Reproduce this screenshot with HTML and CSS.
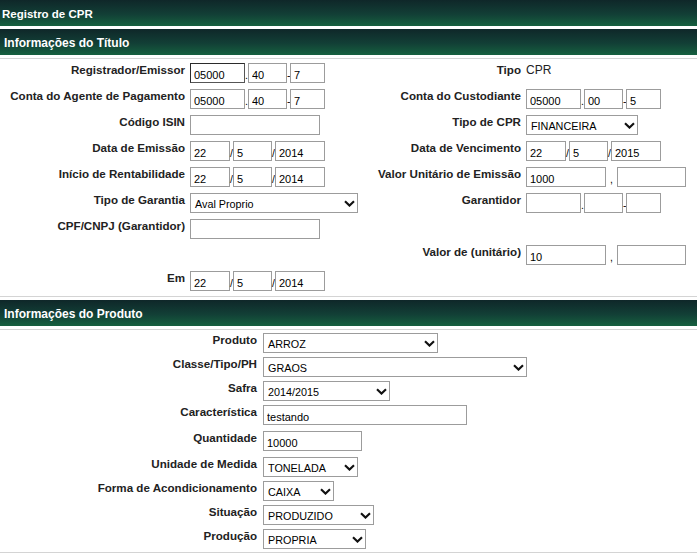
FILE: index.html
```html
<!DOCTYPE html>
<html lang="pt-BR">
<head>
<meta charset="utf-8">
<title>Registro de CPR</title>
<link rel="stylesheet" href="styles.css">
</head>
<body>
<div class="page-title">Registro de CPR</div>

<section class="section">
  <h2 class="section-title">Informações do Título</h2>
  <div class="grid grid-titulo">
    <div class="lbl">Registrador/Emissor</div>
    <div class="val"><input class="in w55 focus" value="05000"><span class="sep">.</span><input class="in w39" value="40"><span class="sep">-</span><input class="in w35" value="7"></div>
    <div class="lbl">Tipo</div>
    <div class="val"><span class="static">CPR</span></div>

    <div class="lbl">Conta do Agente de Pagamento</div>
    <div class="val"><input class="in w55" value="05000"><span class="sep">.</span><input class="in w39" value="40"><span class="sep">-</span><input class="in w35" value="7"></div>
    <div class="lbl">Conta do Custodiante</div>
    <div class="val"><input class="in w55" value="05000"><span class="sep">.</span><input class="in w39" value="00"><span class="sep">-</span><input class="in w35" value="5"></div>

    <div class="lbl">Código ISIN</div>
    <div class="val"><input class="in w130" value=""></div>
    <div class="lbl">Tipo de CPR</div>
    <div class="val"><div class="sel w112"><span>FINANCEIRA</span><svg class="chev" viewBox="0 0 11 7" width="11" height="7"><polyline points="1,1.2 5.5,5.6 10,1.2"/></svg></div></div>

    <div class="lbl">Data de Emissão</div>
    <div class="val"><input class="in w40" value="22"><span class="sep">/</span><input class="in w39" value="5"><span class="sep">/</span><input class="in w50" value="2014"></div>
    <div class="lbl">Data de Vencimento</div>
    <div class="val"><input class="in w40" value="22"><span class="sep">/</span><input class="in w39" value="5"><span class="sep">/</span><input class="in w50" value="2015"></div>

    <div class="lbl">Início de Rentabilidade</div>
    <div class="val"><input class="in w40" value="22"><span class="sep">/</span><input class="in w39" value="5"><span class="sep">/</span><input class="in w50" value="2014"></div>
    <div class="lbl">Valor Unitário de Emissão</div>
    <div class="val"><input class="in w80" value="1000"><span class="sep wide">,</span><input class="in w69" value=""></div>

    <div class="lbl">Tipo de Garantia</div>
    <div class="val"><div class="sel w168"><span>Aval Proprio</span><svg class="chev" viewBox="0 0 11 7" width="11" height="7"><polyline points="1,1.2 5.5,5.6 10,1.2"/></svg></div></div>
    <div class="lbl">Garantidor</div>
    <div class="val"><input class="in w55" value=""><span class="sep">.</span><input class="in w39" value=""><span class="sep">-</span><input class="in w35" value=""></div>

    <div class="lbl">CPF/CNPJ (Garantidor)</div>
    <div class="val"><input class="in w130" value=""></div>
    <div class="lbl"></div>
    <div class="val"></div>

    <div class="lbl"></div>
    <div class="val"></div>
    <div class="lbl">Valor de (unitário)</div>
    <div class="val"><input class="in w80" value="10"><span class="sep wide">,</span><input class="in w69" value=""></div>

    <div class="lbl">Em</div>
    <div class="val"><input class="in w40" value="22"><span class="sep">/</span><input class="in w39" value="5"><span class="sep">/</span><input class="in w50" value="2014"></div>
    <div class="lbl"></div>
    <div class="val"></div>
  </div>
</section>

<section class="section">
  <h2 class="section-title">Informações do Produto</h2>
  <div class="grid grid-produto">
    <div class="lbl">Produto</div>
    <div class="val"><div class="sel w175"><span>ARROZ</span><svg class="chev" viewBox="0 0 11 7" width="11" height="7"><polyline points="1,1.2 5.5,5.6 10,1.2"/></svg></div></div>

    <div class="lbl">Classe/Tipo/PH</div>
    <div class="val"><div class="sel w264"><span>GRAOS</span><svg class="chev" viewBox="0 0 11 7" width="11" height="7"><polyline points="1,1.2 5.5,5.6 10,1.2"/></svg></div></div>

    <div class="lbl">Safra</div>
    <div class="val"><div class="sel w127"><span>2014/2015</span><svg class="chev" viewBox="0 0 11 7" width="11" height="7"><polyline points="1,1.2 5.5,5.6 10,1.2"/></svg></div></div>

    <div class="lbl">Característica</div>
    <div class="val"><input class="in w204" value="testando"></div>

    <div class="lbl">Quantidade</div>
    <div class="val"><input class="in w99" value="10000"></div>

    <div class="lbl">Unidade de Medida</div>
    <div class="val"><div class="sel w95"><span>TONELADA</span><svg class="chev" viewBox="0 0 11 7" width="11" height="7"><polyline points="1,1.2 5.5,5.6 10,1.2"/></svg></div></div>

    <div class="lbl">Forma de Acondicionamento</div>
    <div class="val"><div class="sel w71"><span>CAIXA</span><svg class="chev" viewBox="0 0 11 7" width="11" height="7"><polyline points="1,1.2 5.5,5.6 10,1.2"/></svg></div></div>

    <div class="lbl">Situação</div>
    <div class="val"><div class="sel w111"><span>PRODUZIDO</span><svg class="chev" viewBox="0 0 11 7" width="11" height="7"><polyline points="1,1.2 5.5,5.6 10,1.2"/></svg></div></div>

    <div class="lbl">Produção</div>
    <div class="val"><div class="sel w103"><span>PROPRIA</span><svg class="chev" viewBox="0 0 11 7" width="11" height="7"><polyline points="1,1.2 5.5,5.6 10,1.2"/></svg></div></div>
  </div>
</section>
</body>
</html>
```

FILE: styles.css
```css
html, body {
  margin: 0;
  padding: 0;
  background: #ffffff;
}

body {
  font-family: "Liberation Sans", Arial, sans-serif;
  color: #222222;
  width: 697px;
}

.page-title,
.section-title {
  margin: 0;
  background: linear-gradient(to bottom, #0f2729 0%, #123f36 55%, #16603f 100%);
  color: #ffffff;
  font-weight: bold;
  box-sizing: border-box;
  height: 26px;
  line-height: 14px;
}

.page-title {
  font-size: 11.5px;
  padding: 7px 0 0 2px;
}

.section {
  margin-top: 3px;
}

.section-title {
  font-size: 12px;
  padding: 7px 0 0 4px;
}

.grid {
  display: grid;
  margin-top: 3px;
  border-top: 1px solid #d4d4d4;
  border-bottom: 1px solid #d4d4d4;
}

.grid-titulo {
  padding-top: 4px;
  grid-template-columns: 186px 176px 160px 1fr;
  grid-template-rows: repeat(8, 26px) 25px;
}

.grid-produto {
  padding-top: 3px;
  grid-template-columns: 258px 1fr;
  grid-template-rows: 24px 24px 24px 26px 26px 24px 24px 24px 23px;
}

.lbl {
  text-align: right;
  padding-right: 1px;
  font-size: 11.6px;
  line-height: 13px;
  font-weight: bold;
  color: #222222;
  white-space: nowrap;
}

.val {
  display: flex;
  align-items: baseline;
  padding-left: 4px;
  height: 20px;
}

.grid-produto .val {
  padding-left: 5px;
}

.static {
  font-size: 12px;
  line-height: 14px;
  color: #222222;
  align-self: flex-start;
}

.in {
  box-sizing: border-box;
  height: 20px;
  margin: 0;
  border: 1px solid #9c9c9c;
  border-radius: 0;
  padding: 4px 2px 0 3px;
  font-family: "Liberation Sans", Arial, sans-serif;
  font-size: 11px;
  color: #000000;
  background: #ffffff;
  outline: none;
}

.in.focus {
  border-color: #2b2b2b #555555 #555555 #2b2b2b;
}

.sep {
  font-size: 10.5px;
  color: #000000;
  width: 3px;
  text-align: center;
}

.sep.wide {
  width: auto;
  margin: 0 4px 0 4px;
}

.sel {
  box-sizing: border-box;
  height: 20px;
  border: 1px solid #9c9c9c;
  background: #ffffff;
  display: flex;
  align-items: center;
  justify-content: space-between;
  padding: 2px 2px 0 4px;
  font-size: 10.8px;
  color: #000000;
}

.chev {
  flex: none;
  margin-top: -2px;
  fill: none;
  stroke: #111111;
  stroke-width: 2.1;
}

.w35 { width: 35px; }
.w39 { width: 39px; }
.w40 { width: 40px; }
.w50 { width: 50px; }
.w55 { width: 55px; }
.w69 { width: 69px; }
.w71 { width: 71px; }
.w80 { width: 80px; }
.w95 { width: 95px; }
.w99 { width: 99px; }
.w103 { width: 103px; }
.w111 { width: 111px; }
.w112 { width: 112px; }
.w127 { width: 127px; }
.w130 { width: 130px; }
.w168 { width: 168px; }
.w175 { width: 175px; }
.w204 { width: 204px; }
.w264 { width: 264px; }
```
